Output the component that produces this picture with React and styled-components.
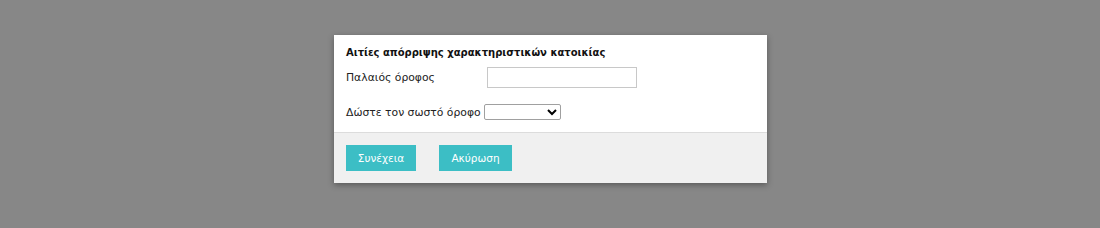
import styled, { createGlobalStyle } from "styled-components";

const Global = createGlobalStyle`
  html, body {
    margin: 0;
    padding: 0;
    background: #878787;
  }
  body {
    font-family: "DejaVu Sans", Verdana, sans-serif;
  }
`;

const Page = styled.div`
  width: 1100px;
  height: 228px;
  display: flex;
  justify-content: flex-start;
  padding: 35px 0 0 334px;
  box-sizing: border-box;
`;

const Dialog = styled.div`
  width: 433px;
  height: 148px;
  background: #fff;
  box-shadow: 0 2px 6px rgba(0, 0, 0, 0.35);
  display: flex;
  flex-direction: column;
`;

const Body = styled.div`
  padding: 12px 12px 0;
  flex: 1;
  color: #222;
`;

const Title = styled.div`
  font-weight: bold;
  font-size: 10px;
  color: #111;
  margin-bottom: 9px;
`;

const Row = styled.div`
  display: flex;
  align-items: center;
  height: ${(p) => p.h}px;
  margin-bottom: ${(p) => p.mb || 0}px;
`;

const Label = styled.label`
  font-size: 10.8px;
  width: ${(p) => (p.w ? `${p.w}px` : "auto")};
  margin-right: ${(p) => p.mr || 0}px;
  flex-shrink: 0;
`;

const TextInput = styled.input`
  width: 150px;
  height: 21px;
  box-sizing: border-box;
  border: 1px solid #c8c8c8;
  padding: 0 4px;
  outline: none;
`;

const Select = styled.select`
  width: 77px;
  height: 16px;
  box-sizing: border-box;
  border: 1px solid #a0a0a0;
  border-radius: 2px;
  font-size: 9px;
  padding: 0;
  background: #fff;
`;

const Footer = styled.div`
  height: 50px;
  background: #f0f0f0;
  border-top: 1px solid #dcdcdc;
  display: flex;
  align-items: center;
  padding: 0 12px;
  gap: 23px;
`;

const Button = styled.button`
  height: 26px;
  padding: 0;
  width: ${(p) => p.w}px;
  border: none;
  background: #3cbec5;
  color: #fff;
  font-family: "DejaVu Sans", Verdana, sans-serif;
  font-size: 10.5px;
  cursor: pointer;
`;

export default function App() {
  return (
    <>
      <Global />
      <Page>
        <Dialog>
          <Body>
            <Title>Αιτίες απόρριψης χαρακτηριστικών κατοικίας</Title>
            <Row h={21} mb={15}>
              <Label w={141}>Παλαιός όροφος</Label>
              <TextInput type="text" />
            </Row>
            <Row h={18}>
              <Label mr={3}>Δώστε τον σωστό όροφο</Label>
              <Select>
                <option></option>
              </Select>
            </Row>
          </Body>
          <Footer>
            <Button w={70}>Συνέχεια</Button>
            <Button w={73}>Ακύρωση</Button>
          </Footer>
        </Dialog>
      </Page>
    </>
  );
}
